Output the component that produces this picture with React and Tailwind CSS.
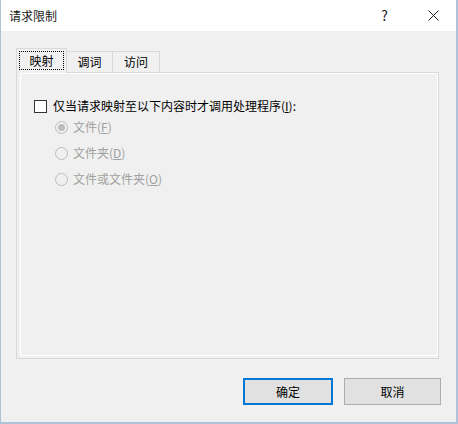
const font = { fontFamily: '"Noto Sans CJK SC", "Noto Sans", sans-serif' };

function Radio({ checked, label, hotkey, tail = ')' }) {
    return (
        <div className="flex items-center h-[26px]">
            <div className="w-[13px] h-[13px] rounded-full border border-[#bcbcbc] bg-[#f0f0f0] flex items-center justify-center">
                {checked && <div className="w-[7px] h-[7px] rounded-full bg-[#bcbcbc]" />}
            </div>
            <span className="ml-[5px] text-[12px] text-[#a0a0a0] leading-none">
                {label}(<span className="underline">{hotkey}</span>{tail}
            </span>
        </div>
    );
}

export default function App() {
    return (
        <div className="w-[458px] h-[424px] bg-[#f0f0f0] flex flex-col border-l border-r-2 border-b-2 border-[#aec3d8] text-black" style={font}>
            {/* title bar */}
            <div className="h-[31px] bg-white flex items-center shrink-0">
                <span className="ml-[8px] text-[12px] text-[#1a1a1a]">请求限制</span>
                <span className="ml-auto text-[14px] mr-[40px] text-[#1a1a1a]">?</span>
                <svg width="11" height="11" viewBox="0 0 11 11" className="mr-[17px]">
                    <path d="M0.5 0.5 L10.5 10.5 M10.5 0.5 L0.5 10.5" stroke="#222" strokeWidth="1" />
                </svg>
            </div>

            <div className="flex-1 flex flex-col pl-[15px] pr-[15px] pt-[17px]">
                {/* tabs */}
                <div className="flex items-end h-[25px] -mb-[1px] relative z-10">
                    <div className="w-[51px] h-[25px] border-t border-l border-r border-[#d9d9d9] bg-[#f0f0f0] flex px-[2px] pt-[2px] pb-[3px]">
                        <div className="flex-1 border border-dotted border-black flex items-center justify-center text-[12px]">映射</div>
                    </div>
                    <div className="w-[46px] h-[22px] border-t border-r border-b border-[#d9d9d9] flex items-center justify-center text-[12px]">调词</div>
                    <div className="w-[47px] h-[22px] border-t border-r border-b border-[#d9d9d9] flex items-center justify-center text-[12px]">访问</div>
                </div>

                {/* tab panel */}
                <div className="w-[423px] h-[287px] border border-[#d9d9d9] flex">
                    <div className="flex-1 ml-[3px] mb-[2px] border border-white flex flex-col pl-[13px] pt-[25px]">
                        <div className="flex items-center h-[14px]">
                            <div className="w-[13px] h-[13px] border border-[#333] bg-white" />
                            <span className="ml-[6px] text-[12px] leading-none">
                                仅当请求映射至以下内容时才调用处理程序(<span className="underline">I</span>):
                            </span>
                        </div>
                        <div className="flex flex-col pl-[21px] mt-[1px]">
                            <Radio checked label="文件" hotkey="F" />
                            <Radio label="文件夹" hotkey="D" />
                            <Radio label="文件或文件夹" hotkey="O" />
                        </div>
                    </div>
                </div>

                {/* buttons */}
                <div className="flex justify-end gap-[11px] mt-[19px]">
                    <button className="w-[90px] h-[27px] border-2 border-[#0078d7] bg-[#e1e1e1] text-[12px]">确定</button>
                    <button className="w-[97px] h-[27px] border border-[#adadad] bg-[#e1e1e1] text-[12px]">取消</button>
                </div>
            </div>
        </div>
    );
}
